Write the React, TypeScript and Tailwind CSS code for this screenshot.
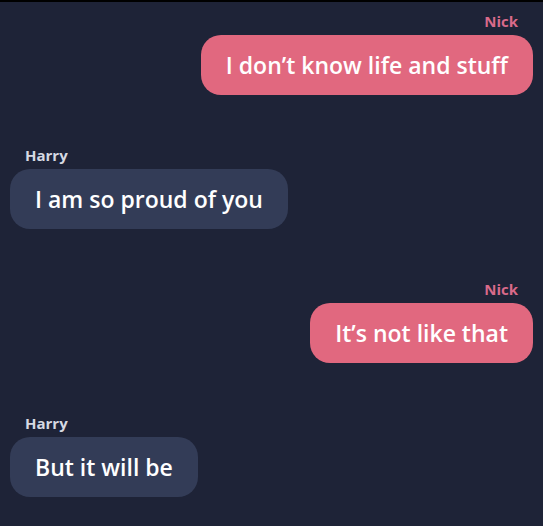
const messages = [
  { from: "Nick", text: "I don’t know life and stuff", mine: true },
  { from: "Harry", text: "I am so proud of you", mine: false },
  { from: "Nick", text: "It’s not like that", mine: true },
  { from: "Harry", text: "But it will be", mine: false },
];

export default function App() {
  return (
    <div
      className="w-[543px] h-[526px] bg-[#1e2337] border-t-2 border-black overflow-hidden px-[10px] pt-[10px] flex flex-col gap-[51px]"
      style={{ fontFamily: '"Open Sans", "Noto Sans", sans-serif' }}
    >
      {messages.map((m, i) => (
        <div key={i} className={`flex flex-col ${m.mine ? "items-end" : "items-start"}`}>
          <div
            className={`px-[15px] text-[15px] leading-[18px] font-bold ${
              m.mine ? "text-[#d96a8a]" : "text-[#d6d9e2]"
            }`}
          >
            {m.from}
          </div>
          <div
            className={`mt-[5px] h-[60px] flex items-center px-[25px] rounded-[20px] text-[23px] font-semibold text-white ${
              m.mine ? "bg-[#e1687f]" : "bg-[#333c57]"
            }`}
          >
            {m.text}
          </div>
        </div>
      ))}
    </div>
  );
}
